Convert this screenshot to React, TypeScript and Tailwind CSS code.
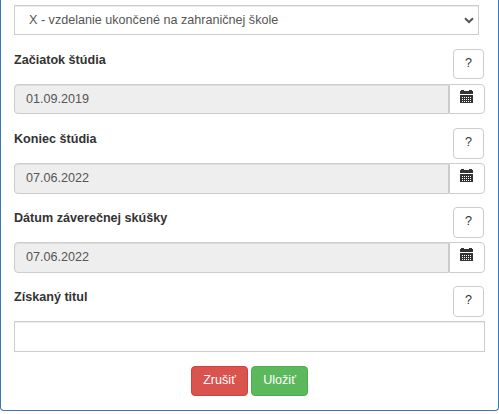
import clsx from 'clsx'

const fields = [
  { label: 'Začiatok štúdia', value: '01.09.2019', date: true, height: 'h-[30px]' },
  { label: 'Koniec štúdia', value: '07.06.2022', date: true, height: 'h-[31px]' },
  { label: 'Dátum záverečnej skúšky', value: '07.06.2022', date: true, height: 'h-[31px]' },
  { label: 'Získaný titul', value: '', date: false, height: 'h-[31px]' },
]

function CalendarIcon() {
  return (
    <svg
      aria-hidden="true"
      width="13"
      height="13"
      viewBox="0 0 13 13"
      fill="#333"
      shapeRendering="crispEdges"
    >
      <path d="M1 0h3v1h5V0h3v1h1v3H0V1h1z" />
      <path d="M0 5h13v8H0z" />
      <path
        d="M2 7.5h10M2 9.5h10M2 11.5h10"
        stroke="#fff"
        strokeWidth="1"
        strokeDasharray="1 1"
      />
    </svg>
  )
}

function DateInput({ label, value, height }: { label: string; value: string; height: string }) {
  return (
    <div className={clsx('flex', height)}>
      <input
        aria-label={label}
        className="w-[435px] rounded-l border border-[#ccc] bg-[#eee] px-[11px] pb-px text-[#555] shadow-[inset_0_1px_1px_rgba(0,0,0,0.075)] outline-none"
        readOnly
        value={value}
      />
      <button
        aria-label="Kalendár"
        className="flex w-9 justify-center rounded-r border border-[#ccc] bg-white pt-[5px] pr-px hover:bg-[#e6e6e6]"
        type="button"
      >
        <CalendarIcon />
      </button>
    </div>
  )
}

export default function App() {
  return (
    <form className="h-[411px] w-[499px] rounded-b border border-t-0 border-[#337ab7] bg-white px-[13px] pt-[5px] font-['Liberation_Sans',Arial,sans-serif] text-[12.6px] leading-[18px] text-[#333]">
      <div className="relative mb-[14px] h-[30px] w-[465px]">
        <select
          aria-label="Vzdelanie"
          className="h-full w-full appearance-none border border-[#ccc] bg-white pr-8 pb-px pl-[14px] text-[#555] shadow-[inset_0_1px_1px_rgba(0,0,0,0.075)] outline-none"
        >
          <option>X - vzdelanie ukončené na zahraničnej škole</option>
        </select>
        <svg
          aria-hidden="true"
          className="pointer-events-none absolute top-3 right-[5px]"
          width="10"
          height="7"
          viewBox="0 0 10 7"
          fill="none"
          stroke="#555"
          strokeWidth="2"
        >
          <path d="M1 1.2l4 3.8 4-3.8" />
        </svg>
      </div>

      {fields.map((field) => (
        <div className="h-[79px]" key={field.label}>
          <div className="flex h-[35px] items-start justify-between pr-px">
            <label className="pt-[2px] font-bold">{field.label}</label>
            <button
              className={clsx(
                'w-[31px] rounded border border-[#ccc] bg-white pb-[3px] hover:bg-[#e6e6e6]',
                field.height,
              )}
              type="button"
            >
              ?
            </button>
          </div>
          {field.date ? (
            <DateInput label={field.label} value={field.value} height={field.height} />
          ) : (
            <input
              aria-label={field.label}
              className="block h-[31px] w-full border border-[#ccc] bg-white px-[11px] text-[#555] shadow-[inset_0_1px_1px_rgba(0,0,0,0.075)] outline-none"
              defaultValue={field.value}
            />
          )}
        </div>
      ))}

      <div className="flex justify-center gap-[3px] pt-px">
        <button
          className="h-[30px] w-[57px] rounded border border-[#d43f3a] bg-[#d9534f] pb-[3px] text-white hover:bg-[#c9302c]"
          type="button"
        >
          Zrušiť
        </button>
        <button
          className="h-[30px] w-[57px] rounded border border-[#4cae4c] bg-[#5cb85c] pb-[3px] text-white hover:bg-[#449d44]"
          type="button"
        >
          Uložiť
        </button>
      </div>
    </form>
  )
}
